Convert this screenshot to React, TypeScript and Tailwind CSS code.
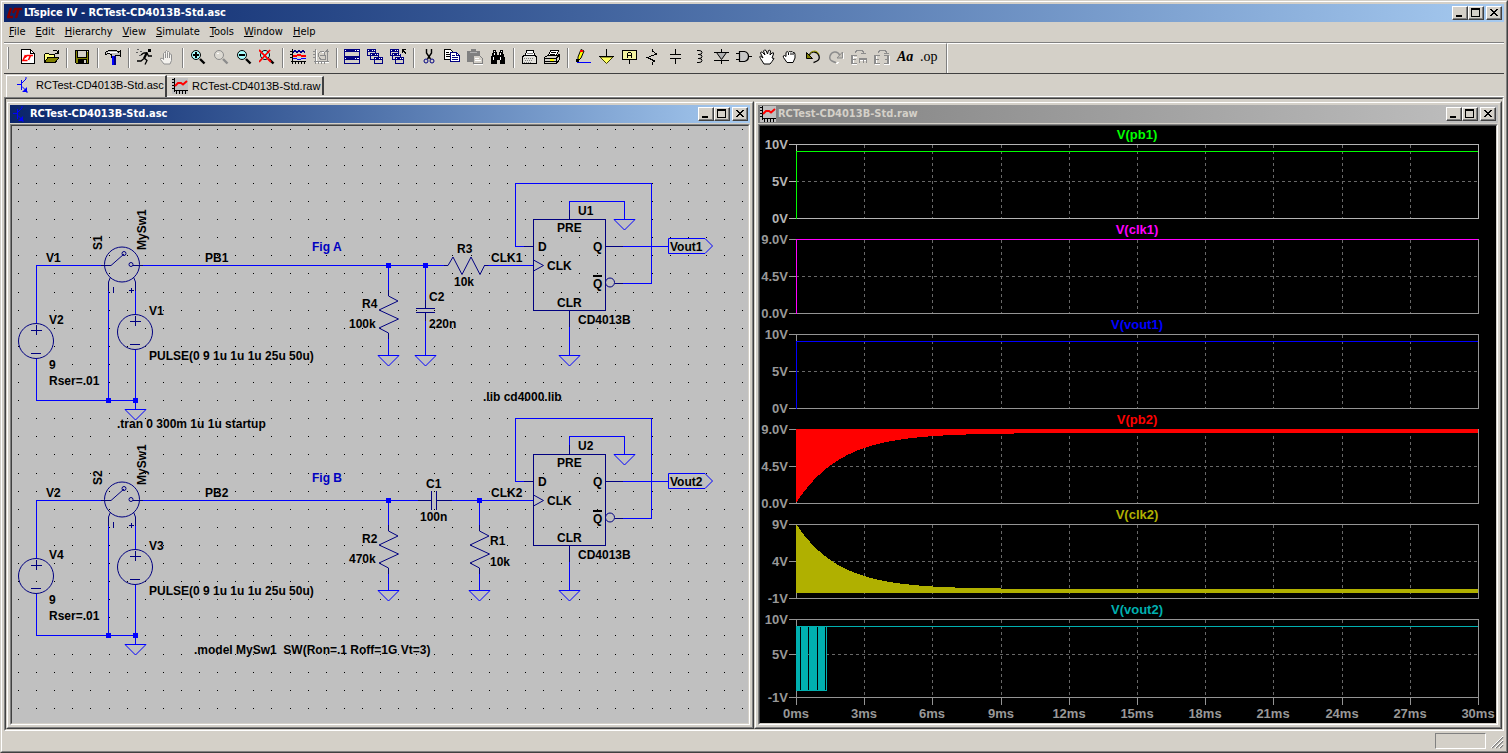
import type { ReactNode } from "react";

const menus = ["File", "Edit", "Hierarchy", "View", "Simulate", "Tools", "Window", "Help"];

const Icon = ({ children }: { children: ReactNode }) => (
  <svg
    width={16}
    height={16}
    viewBox="0 0 16 16"
    fill="none"
    stroke="#000"
    shapeRendering="crispEdges"
    aria-hidden="true"
    className="shrink-0">
    {children}
  </svg>
);

const Lens = ({ tint, line }: { tint: string; line: string }) => (
  <>
    <circle cx="6" cy="6" r="4.5" fill={tint} stroke={line} shapeRendering="auto" />
    <path d="M10 10l4.5 4.5" stroke={line} strokeWidth="2.4" shapeRendering="auto" />
  </>
);

const MiniWindow = ({ x, y }: { x: number; y: number }) => (
  <g stroke="none">
    <path d={`M${x} ${y}h9v7h-9z`} fill="#000080" />
    <path d={`M${x + 1} ${y + 3}h7v3h-7z`} fill="#d4d0c8" />
    <path d={`M${x + 1} ${y + 1}h1v1h-1zM${x + 5} ${y + 1}h1v1h-1zM${x + 7} ${y + 1}h1v1h-1z`} fill="#fff" />
  </g>
);

type Tool = { name: string; icon: ReactNode; disabled?: boolean };

const toolGroups: Tool[][] = [
  [
    {
      name: "New Schematic",
      icon: (
        <Icon>
          <path d="M1.5 .5h9l4 4v10h-13z" fill="#fff" />
          <path d="M10.5 .5v4h4" />
          <path d="M5.5 6L3 11.5h4.500M5 8.500L7 6.500h6M10.500 6.500L8.500 11" stroke="#f00" strokeWidth="1.6" shapeRendering="auto" />
        </Icon>
      ),
    },
    {
      name: "Open",
      icon: (
        <Icon>
          <path d="M1 14V5h1V4h3v1h6v3h-6L1 14z" fill="#ffff80" stroke="none" />
          <path d="M5 9h10.5l-3.5 5H2z" fill="#808000" stroke="none" />
          <path d="M1.5 13.5v-8l1-1h3l1 1h5v3M1.500 13.500l3.500-5h11l-4 5.500z" />
          <path d="M9.5 2.5l1-1h3l1.500 2M15.500 1v3.500H12" />
        </Icon>
      ),
    },
  ],
  [
    {
      name: "Save",
      icon: (
        <Icon>
          <path d="M1.5 1.5h13v13h-12l-1-1z" fill="#808000" />
          <path d="M4 2h8v6H4z" fill="#d4d0c8" stroke="none" />
          <path d="M3.5 1v7.5h9V1" />
          <path d="M4 10h9v5H4z" fill="#000" stroke="none" />
          <path d="M10 11h2v3h-2zM13 2h1v1h-1z" fill="#d4d0c8" stroke="none" />
        </Icon>
      ),
    },
  ],
  [
    {
      name: "Control Panel",
      icon: (
        <Icon>
          <path d="M.5 5.5V3.500L3.500 1.500h8l2 1.500 2-1v5l-2-1h-3.500v1.500h-4V5.500L3.500 4.500z" fill="#c0c0c0" />
          <path d="M3 3.5h9" stroke="#fff" />
          <path d="M7 7h3v9H7z" fill="#00f" stroke="none" />
          <path d="M9 7h2v9H9z" fill="#000080" stroke="none" />
          <path d="M6.5 7v2" />
        </Icon>
      ),
    },
  ],
  [
    {
      name: "Run",
      icon: (
        <Icon>
          <path d="M12 0h3v3h-3z" fill="#000" stroke="none" />
          <path d="M7.5 4h3.500l1.500 3H16M8 9l3 2.500-2 4M8 9.500l-3 2.500H1M7.500 4L5 6" strokeWidth="1.3" shapeRendering="auto" />
          <path d="M11 3.5L8 9.500" strokeWidth="2.2" shapeRendering="auto" />
          <path d="M1 .5h2M0 3.500h2M4 2.500h2M3 6.500h2" stroke="#606060" />
        </Icon>
      ),
    },
    {
      name: "Halt",
      disabled: true,
      icon: (
        <Icon>
          <path
            d="M5 15L1.500 10.500Q1 8.500 3.500 9.500L4.500 10.500V4.500Q5.500 2.500 6.500 4.500V2.500Q7.500.5 8.500 2.500V3.500Q9.500 1.500 10.500 3.500V5.500Q12 4 12.500 6V11.500L11 15z"
            fill="#f4f2ee"
            stroke="#909090"
            shapeRendering="auto"
          />
          <path d="M6.500 5v4M8.500 4v5M10.500 5v4" stroke="#909090" />
        </Icon>
      ),
    },
  ],
  [
    {
      name: "Zoom In",
      icon: (
        <Icon>
          <Lens tint="#a8ffff" line="#000" />
          <path d="M3 6h6M6 3v6" strokeWidth="2" />
        </Icon>
      ),
    },
    {
      name: "Pan",
      disabled: true,
      icon: (
        <Icon>
          <Lens tint="#dcd9d2" line="#8c8c8c" />
          <path d="M4 4h2" stroke="#fff" />
        </Icon>
      ),
    },
    {
      name: "Zoom Back",
      icon: (
        <Icon>
          <Lens tint="#a8ffff" line="#000" />
          <path d="M3 6h6" strokeWidth="2" />
        </Icon>
      ),
    },
    {
      name: "Zoom Full Extents",
      icon: (
        <Icon>
          <Lens tint="#a8ffff" line="#000" />
          <path d="M0 1l12 12M11 1L0 13" stroke="#f00" strokeWidth="1.8" shapeRendering="auto" />
        </Icon>
      ),
    },
  ],
  [
    {
      name: "Autorange",
      icon: (
        <Icon>
          <path d="M2.5 0v15M1 12.500h15M0 2.500h2M0 5.500h2M0 8.500h2M5.500 13v2M8.500 13v2M11.500 13v2M14.500 13v2" />
          <path d="M3 3.5l2-2 2 2 2-2 2 2 2-2 2 2" stroke="#000080" />
          <path d="M3 7h3l2-1h2l2 1h4" stroke="#f00" strokeWidth="1.600" />
          <path d="M3 9.5h3l2 1h2l2-1h4" stroke="#00f" />
        </Icon>
      ),
    },
    {
      name: "FFT",
      disabled: true,
      icon: (
        <Icon>
          <path d="M3.500 1v13M2 13.500h14M9 3.500h3" stroke="#fff" />
          <path d="M2.5 0v15M1 12.500h15M0 2.500h2M0 5.500h2M0 8.500h2M5.500 13v2M8.500 13v2M11.500 13v2" stroke="#8c8c8c" />
          <path d="M14.5 1v11M12.500 3l2-2 1 2M9 2.500Q5 3 5.500 6.500T9 10.500h3M9 2.500q3 0 3 3v5M7 6.500h5" stroke="#8c8c8c" />
        </Icon>
      ),
    },
  ],
  [
    {
      name: "Tile Windows",
      icon: (
        <Icon>
          <g stroke="none">
            <path d="M0 0h16v15H0z" fill="#000080" />
            <path d="M1 3h14v4H1zM1 11h14v3H1z" fill="#d4d0c8" />
            <path d="M1 1h1v1H1zM11 1h1v1h-1zM13 1h2v1h-2zM1 9h1v1H1zM11 9h1v1h-1zM13 9h2v1h-2z" fill="#fff" />
          </g>
        </Icon>
      ),
    },
    {
      name: "Cascade",
      icon: (
        <Icon>
          <MiniWindow x={0} y={0} />
          <MiniWindow x={3} y={4} />
          <MiniWindow x={7} y={8} />
        </Icon>
      ),
    },
    {
      name: "Close All",
      icon: (
        <Icon>
          <MiniWindow x={0} y={0} />
          <MiniWindow x={2} y={4} />
          <MiniWindow x={5} y={8} />
          <path d="M9 0h4v5h-4z" fill="#d4d0c8" stroke="none" />
          <path d="M12.5 4V.5H16M12.500 1l3.500 3.500" />
        </Icon>
      ),
    },
  ],
  [
    {
      name: "Cut",
      icon: (
        <Icon>
          <path d="M5.5 0v4l4 6M10.500 0v4l-4 6" strokeWidth="1.4" shapeRendering="auto" />
          <circle cx="5" cy="12" r="2" stroke="#000080" shapeRendering="auto" />
          <circle cx="11" cy="12" r="2" stroke="#000080" shapeRendering="auto" />
        </Icon>
      ),
    },
    {
      name: "Copy",
      icon: (
        <Icon>
          <path d="M.5 .5h6l2 2v8h-8z" fill="#fff" />
          <path d="M2 3.5h3M2 5.500h5M2 7.500h5" />
          <path d="M6.5 3.5h6l3 3v6h-9z" fill="#fff" stroke="#000080" />
          <path d="M12.5 3.5v3h3M8 6.500h3M8 8.500h6M8 10.500h6" stroke="#000080" />
        </Icon>
      ),
    },
    {
      name: "Paste",
      disabled: true,
      icon: (
        <Icon>
          <path d="M0 2h4V0h5v2h4v11H0z" fill="#808080" stroke="none" />
          <path d="M3 3.5h7" stroke="#b0b0b0" />
          <path d="M6.5 6.5h6l3 3v5h-9z" fill="#d4d0c8" stroke="#808080" />
          <path d="M8 9.5h4M8 11.500h6M7 15.500h9" stroke="#fff" />
        </Icon>
      ),
    },
    {
      name: "Find",
      icon: (
        <Icon>
          <path d="M3 1h3v2h1v3h2V3h1V1h3v2l2 6v6h-5v-4H7v4H1V9l2-6z" fill="#000" stroke="none" />
          <path d="M4 4v2M3 8v3M10.500 4v2M10.500 8v3M4 2h1M11 2h1" stroke="#fff" />
        </Icon>
      ),
    },
  ],
  [
    {
      name: "Print Setup",
      icon: (
        <Icon>
          <path d="M4.5 6.5l1-5h7l1 5" fill="#fff" />
          <path d="M1.5 7.5l2-1h10l2 1v7h-14z" fill="#e4e2dc" />
          <path d="M3 9h1M5 9h1M7 9h1M9 9h1M11 9h1M4 11h1M6 11h1M8 11h1M10 11h1M3 13h1M5 13h1M7 13h1M9 13h1" stroke="#808080" />
          <path d="M6 4h6" stroke="#808080" />
        </Icon>
      ),
    },
    {
      name: "Print",
      icon: (
        <Icon>
          <path d="M4.5 6.5l2-5h8l-2 5" fill="#fff" />
          <path d="M7 3.5h5M6 5.500h5" />
          <path d="M.5 8.5l3-2h10l2-1v5l-3 4h-12z" fill="#d4d0c8" />
          <path d="M1 9.5h11l3-3M1 12.500h11M12.500 9v5" />
          <path d="M6 10h4v2H6z" fill="#ff0" stroke="none" />
        </Icon>
      ),
    },
  ],
  [
    {
      name: "Wire",
      icon: (
        <Icon>
          <path d="M3 8L6 .5l3 1.500L6 9l-3 3z" fill="#ff0" shapeRendering="auto" />
          <path d="M5.5 1.5L8 2.500" stroke="#f00" strokeWidth="2" />
          <path d="M1 10h3v3H1z" fill="#000" stroke="none" />
          <path d="M2 13.5h14" stroke="#00f" />
        </Icon>
      ),
    },
    {
      name: "Ground",
      icon: (
        <Icon>
          <path d="M2 8h13l-6.500 6.500z" fill="#ffff60" stroke="#404000" shapeRendering="auto" />
          <path d="M8.5 0v7M1 7.500h15" />
        </Icon>
      ),
    },
    {
      name: "Label Net",
      icon: (
        <Icon>
          <path d="M1.5 1.5h14v9h-14z" fill="#f4f4a0" />
          <path d="M8.5 11v4M6.500 9v-4l1-1.500h2l1 1.500v4M7 6.500h4" />
        </Icon>
      ),
    },
    {
      name: "Resistor",
      icon: (
        <Icon>
          <path d="M8.5 0v2l4 3-9 3.500 7 3.500-2 1.500V16" />
        </Icon>
      ),
    },
    {
      name: "Capacitor",
      icon: (
        <Icon>
          <path d="M8.5 0v5M8.500 9v6M3 5.500h11M3 9.500h11" />
        </Icon>
      ),
    },
    {
      name: "Inductor",
      icon: (
        <Icon>
          <path d="M7 1.5h2q3 0 3 2t-3 2H8h1q3 0 3 2t-3 2H8h1q3 0 3 2t-3 2H7" shapeRendering="auto" />
        </Icon>
      ),
    },
    {
      name: "Diode",
      icon: (
        <Icon>
          <path d="M3.5 3.5h10l-5 7z" fill="#b0b0b0" shapeRendering="auto" />
          <path d="M1 3.5h15M8.500 0v3M8.500 11v4M1 11.500h15" />
        </Icon>
      ),
    },
    {
      name: "Component",
      icon: (
        <Icon>
          <path d="M0 4.5h4M0 10.500h4M12 7.500h4" />
          <path d="M3.5 2.5h5q4 1 4 5t-4 5h-5z" fill="#c8c8c8" strokeWidth="1.2" shapeRendering="auto" />
        </Icon>
      ),
    },
    {
      name: "Move",
      icon: (
        <Icon>
          <path
            d="M5 15L1.500 9.500Q0 7.500 1.500 7L4 9 1.500 4Q2 2 3.500 3.500L6 6 4.500 2Q5.500 0 7 1.500L8.500 5 9.500 1.500Q11 .5 11.500 2L11 6l2-2Q15 3 14.500 5L13 9l2 .5-2 3-2 2.500z"
            fill="#fff"
            shapeRendering="auto"
          />
        </Icon>
      ),
    },
    {
      name: "Drag",
      icon: (
        <Icon>
          <path
            d="M5 13.5L1.500 8.500Q.5 6.500 2.500 6.500L4 7.500V3.500Q5 1.500 6.500 3.500Q7 1.500 9 3Q10 1.500 11 3.500Q13 3 13 5.500V9l-2 4.500z"
            fill="#fff"
            shapeRendering="auto"
          />
          <path d="M6.5 4v2M9 4v2M11 4v2" shapeRendering="auto" />
        </Icon>
      ),
    },
    {
      name: "Undo",
      icon: (
        <Icon>
          <path d="M4 6.5Q6 2.500 9.500 3t4.500 4-2 5-3.500 1.500" strokeWidth="1.300" shapeRendering="auto" />
          <path d="M4.5 5Q7 1.500 10 2t4 3.500" stroke="#a0a000" shapeRendering="auto" />
          <path d="M1.5 3.5v6h6z" fill="#808000" shapeRendering="auto" />
        </Icon>
      ),
    },
    {
      name: "Redo",
      disabled: true,
      icon: (
        <Icon>
          <path d="M12 6.5Q10 2.500 6.500 3T2 7t2 5 4 1.500" stroke="#8c8c8c" strokeWidth="1.500" shapeRendering="auto" />
          <path d="M14.5 3v6H9z" fill="#c4c0b8" stroke="#8c8c8c" shapeRendering="auto" />
          <path d="M15.5 4v6M8 14.500l3-1" stroke="#fff" />
        </Icon>
      ),
    },
    {
      name: "Rotate",
      disabled: true,
      icon: (
        <Icon>
          <path d="M2.500 7v8M1 15.500h5M8 11.500h8M2 8.500h4" stroke="#fff" />
          <path d="M1 6v9M8 10h8" stroke="#8c8c8c" strokeWidth="2" />
          <path d="M1 6.500h5M1 10.500h4M1 14.500h5M8.500 14v-4M12.500 10v4M15.500 9v5M4.500 4V2.500l2-1h4l2 1V5M10 4.500h5" stroke="#8c8c8c" />
        </Icon>
      ),
    },
    {
      name: "Mirror",
      disabled: true,
      icon: (
        <Icon>
          <path d="M2.500 7v8M1 15.500h5M10 15.500h6M15.500 7v9" stroke="#fff" />
          <path d="M1 6v9M14 6v9" stroke="#8c8c8c" strokeWidth="2" />
          <path d="M1 6.500h5M1 10.500h4M1 14.500h5M10 6.500h5M11 10.500h4M10 14.500h5M4.500 4V2.500l2-1h4l2 1V5M10 4.500h5" stroke="#8c8c8c" />
        </Icon>
      ),
    },
    {
      name: "Text",
      icon: <span className="font-['Liberation_Serif',serif] text-sm font-bold italic leading-4">Aa</span>,
    },
    {
      name: "SPICE Directive",
      icon: <span className="font-['Liberation_Serif',serif] text-sm leading-4">.op</span>,
    },
  ],
];

const Transistor = () => (
  <Icon>
    <g stroke="#00f">
      <path d="M1 7.5h4M5.500 3v10" />
      <path d="M6 6l4-4V0M6 9.500l5 5V16" shapeRendering="auto" />
      <path d="M11 10v5H6z" fill="#00f" stroke="none" shapeRendering="auto" />
    </g>
  </Icon>
);

const WaveIcon = () => (
  <Icon>
    <path d="M0 0h16v16H0z" fill="#c0c0c0" stroke="none" />
    <path d="M2.5 0v14M2 12.500h14" />
    <path d="M0 1.500h2M0 4.500h2M0 7.500h2M0 10.500h2M4.500 13v3M7.500 13v3M10.500 13v3M13.500 13v3" strokeWidth="1.500" />
    <path d="M3 8l3-3h3l2 1.500 4-3.500" stroke="#f00" strokeWidth="2" shapeRendering="auto" />
  </Icon>
);

const captionButton =
  "flex h-3.5 w-4 items-center justify-center border border-t-white border-l-white border-r-[#404040] border-b-[#404040] bg-[#d4d0c8] shadow-[inset_-1px_-1px_0_#808080]";

const CaptionButtons = () => (
  <div className="flex">
    <button className={captionButton} aria-label="Minimize">
      <svg width={12} height={10} shapeRendering="crispEdges">
        <path d="M2 7h6v2H2z" />
      </svg>
    </button>
    <button className={captionButton} aria-label="Maximize">
      <svg width={12} height={10} shapeRendering="crispEdges">
        <path d="M1 0h9v9H1zM2 2v6h7V2z" fillRule="evenodd" />
      </svg>
    </button>
    <button className={`${captionButton} ml-0.5`} aria-label="Close">
      <svg width={12} height={10} shapeRendering="crispEdges">
        <path d="M2 1h2v1h1v1h2V2h1V1h2v1H9v1H8v1H7v1h1v1h1v1h1v1H8V7H7V6H5v1H4v1H2V7h1V6h1V5h1V4H4V3H3V2H2z" />
      </svg>
    </button>
  </div>
);

type ChildWindowProps = { title: string; icon: ReactNode; active?: boolean; children: ReactNode };

const ChildWindow = ({ title, icon, active, children }: ChildWindowProps) => (
  <section className="flex min-w-0 flex-1 border border-t-[#d4d0c8] border-r-[#404040] border-b-[#404040] border-l-[#d4d0c8]">
    <div className="flex min-w-0 flex-1 flex-col border border-t-white border-r-[#808080] border-b-[#808080] border-l-white p-0.5">
      <header
        className={
          active
            ? "flex h-[18px] items-center gap-0.5 bg-linear-to-r from-[#0a246a] to-[#a6caf0] px-0.5 text-white"
            : "flex h-[18px] items-center gap-0.5 bg-linear-to-r from-[#808080] to-[#c0c0c0] px-0.5 text-[#d4d0c8]"
        }>
        {icon}
        <h2 className="flex-1 font-['DejaVu_Sans_Condensed','DejaVu_Sans',sans-serif] text-[11px] font-bold leading-4">
          {title}
        </h2>
        <CaptionButtons />
      </header>
      <div className="mt-px flex min-h-0 flex-1 border border-t-[#808080] border-r-white border-b-white border-l-[#808080]">
        <div className="min-h-0 min-w-0 flex-1 border border-t-[#404040] border-r-[#d4d0c8] border-b-[#d4d0c8] border-l-[#404040]">
          {children}
        </div>
      </div>
    </div>
  </section>
);

// one 1px dot every 18.1px, snapped to whole pixels
const gridDots = Array.from({ length: 33 }, (_, row) =>
  Array.from({ length: 41 }, (_, col) => `M${Math.round(18 + col * 18.1)} ${Math.round(128.6 + row * 18.1)}.5h1`).join(""),
).join("");

const Ground = ({ x, y }: { x: number; y: number }) => (
  <path d={`M${x - 10} ${y}.5h21l-10.5 10.5z`} stroke="#00f" shapeRendering="auto" />
);

const Node = ({ x, y }: { x: number; y: number }) => (
  <path d={`M${x - 2} ${y - 2}h5v5h-5z`} fill="#00f" stroke="none" />
);

const Label = ({ x, y, children }: { x: number; y: number; children: ReactNode }) => (
  <text x={x} y={y} fill="#000" stroke="none" className="whitespace-pre">
    {children}
  </text>
);

const VerticalLabel = ({ x, y, children }: { x: number; y: number; children: ReactNode }) => (
  <text transform={`translate(${x} ${y}) rotate(-90)`} fill="#000" stroke="none">
    {children}
  </text>
);

const VSource = ({ x, y }: { x: number; y: number }) => (
  <g stroke="#000080">
    <circle cx={x} cy={y} r="17.5" shapeRendering="auto" />
    <path d={`M${x - 5} ${y - 11}.5h11M${x}.5 ${y - 16}v10M${x - 5} ${y + 12}.5h10`} />
  </g>
);

const VResistor = ({ x, y }: { x: number; y: number }) => (
  <path d={`M${x}.5 ${y - 6}v6l9.5 5-19 9 19.500 9-19.500 9 9.500 5v6`} stroke="#000080" shapeRendering="auto" />
);

type StageProps = { supply: string; input: string; pulse: string; net: string; sw: string; chip: string; clk: string; out: string };

// Everything the two test circuits share: supply, switch, pulse source and flip-flop
const Stage = ({ supply, input, pulse, net, sw, chip, clk, out }: StageProps) => (
  <>
    <path
      stroke="#00f"
      d="M36.5 323V265.500H102M36.500 359v41.500H136M108.500 290V400M135.500 290v25M135.500 350v59M143 265.500H388M569.500 219v-17.500H624.500V219M533 246.500H515.500V183.500H651.500V283.500H615M605 246.500H669M569.500 310V355"
    />
    <Node x={108} y={400} />
    <Node x={135} y={400} />
    <Ground x={135} y={409} />
    <VSource x={36} y={341} />
    <VSource x={135} y={332} />

    <g stroke="#000080">
      <circle cx="122" cy="264.5" r="17.5" shapeRendering="auto" />
      <circle cx="124" cy="253.5" r="2" shapeRendering="auto" />
      <circle cx="131" cy="264.5" r="2" shapeRendering="auto" />
      <path d="M101 265.5h10M133 265.500h10M108.500 282v9M135.500 282v9M113.500 287v6M129 290.500h5M131.500 288v5" />
      <path d="M111 265.5L124 254M110.500 277l-2 5M133.500 277l2 5" shapeRendering="auto" />
      <path d="M533.5 219.5h72v91h-72zM524 246.500h9M524 265.500h9M605 246.500h18M615 283.500h8M569.500 210v9M569.500 310v17" />
      <circle cx="610" cy="282.5" r="4.5" shapeRendering="auto" />
      <path d="M533.5 260l10 5.500-10 5.500" shapeRendering="auto" />
    </g>

    <Ground x={624} y={219} />
    <Ground x={569} y={355} />
    <path d="M668.5 238.5H705l7.500 7.500-7.500 7.500H668.500z" stroke="#00f" shapeRendering="auto" />

    <Label x={46} y={262}>{input}</Label>
    <VerticalLabel x={102} y={250}>{sw}</VerticalLabel>
    <VerticalLabel x={146} y={250}>MySw1</VerticalLabel>
    <Label x={205} y={262}>{net}</Label>
    <Label x={49} y={324}>{supply}</Label>
    <Label x={49} y={369}>9</Label>
    <Label x={49} y={385}>Rser=.01</Label>
    <Label x={149} y={315}>{pulse}</Label>
    <Label x={149} y={360}>PULSE(0 9 1u 1u 1u 25u 50u)</Label>
    <Label x={491} y={262}>{clk}</Label>
    <Label x={578} y={215}>{chip}</Label>
    <Label x={557} y={232}>PRE</Label>
    <Label x={538} y={251}>D</Label>
    <Label x={547} y={270}>CLK</Label>
    <Label x={593} y={251}>Q</Label>
    <Label x={593} y={288}>Q</Label>
    <path d="M593 276h9" stroke="#000" strokeWidth="2" />
    <Label x={557} y={307}>CLR</Label>
    <Label x={578} y={324}>CD4013B</Label>
    <Label x={670} y={251}>{out}</Label>
  </>
);

const Schematic = () => (
  <svg
    viewBox="12 126 736 597"
    preserveAspectRatio="xMinYMin meet"
    fill="none"
    shapeRendering="crispEdges"
    className="block h-full w-full bg-[#c0c0c0] font-['Liberation_Sans',Arial,sans-serif] text-[12px] font-bold">
    <path d={gridDots} stroke="#000" />

    <Stage supply="V2" input="V1" pulse="V1" net="PB1" sw="S1" chip="U1" clk="CLK1" out="Vout1" />
    <path d="M388 265.5H448M484 265.500h49M388.500 265v25M388.500 338v17M425.500 265v43M425.500 313v42" stroke="#00f" />
    <path d="M416 308.5h19M416 312.500h19M425.500 300v8M425.500 313v8" stroke="#000080" />
    <path d="M444 265.5h4l5-8.500 9 17.500 9-17.500 9 17.500 4.500-9h4" stroke="#000080" shapeRendering="auto" />
    <VResistor x={388} y={296} />
    <Node x={388} y={265} />
    <Node x={425} y={265} />
    <Ground x={388} y={355} />
    <Ground x={425} y={355} />
    <Label x={457} y={253}>R3</Label>
    <Label x={454} y={286}>10k</Label>
    <Label x={362} y={308}>R4</Label>
    <Label x={349} y={328}>100k</Label>
    <Label x={429} y={301}>C2</Label>
    <Label x={429} y={328}>220n</Label>

    <g transform="translate(0 235)">
      <Stage supply="V4" input="V2" pulse="V3" net="PB2" sw="S2" chip="U2" clk="CLK2" out="Vout2" />
      <path d="M388 265.5H418M452 265.500h81M388.500 265v25M388.500 338v17M479.500 265v25M479.500 338v17" stroke="#00f" />
      <path d="M418 265.5h13M437 265.500h15M431.500 256v19M436.500 256v19" stroke="#000080" />
      <VResistor x={388} y={296} />
      <VResistor x={479} y={296} />
      <Node x={388} y={265} />
      <Node x={479} y={265} />
      <Ground x={388} y={355} />
      <Ground x={479} y={355} />
      <Label x={426} y={253}>C1</Label>
      <Label x={420} y={286}>100n</Label>
      <Label x={362} y={308}>R2</Label>
      <Label x={349} y={328}>470k</Label>
      <Label x={490} y={310}>R1</Label>
      <Label x={490} y={331}>10k</Label>
    </g>

    <text x={312} y={251} fill="#0000c0">Fig A</text>
    <text x={312} y={482} fill="#0000c0">Fig B</text>
    <Label x={117} y={428}>.tran 0 300m 1u 1u startup</Label>
    <Label x={483} y={401}>.lib cd4000.lib</Label>
    <Label x={194} y={654}>{".model MySw1  SW(Ron=.1 Roff=1G Vt=3)"}</Label>
  </svg>
);

const LEFT = 36;
const RIGHT = 718;

const timeTicks = Array.from({ length: 11 }, (_, i) => ({
  x: Math.round(LEFT + i * 68.2),
  label: `${i * 3}ms`,
}));

// Exponential envelope sampled once per pixel column
const envelope = (start: number, end: number, tau: number, base: number) => {
  const points = Array.from(
    { length: RIGHT - LEFT },
    (_, i) => `L${LEFT + i} ${Math.round(end + (start - end) * Math.exp(-i / tau))}`,
  );
  return `M${LEFT} ${base}${points.join("")}L${RIGHT} ${end}V${base}z`;
};

type Pane = { title: string; color: string; top: number; mid: number; bottom: number; labels: [string, string, string]; trace: ReactNode };

const panes: Pane[] = [
  {
    title: "V(pb1)",
    color: "#00ff00",
    top: 18,
    mid: 55,
    bottom: 92,
    labels: ["10V", "5V", "0V"],
    trace: <path d="M36.5 93V25.500H718" stroke="#00ff00" />,
  },
  {
    title: "V(clk1)",
    color: "#ff00ff",
    top: 113,
    mid: 150,
    bottom: 187,
    labels: ["9.0V", "4.5V", "0.0V"],
    trace: <path d="M36.5 188V113.500H718" stroke="#ff00ff" />,
  },
  {
    title: "V(vout1)",
    color: "#0000ff",
    top: 208,
    mid: 245,
    bottom: 282,
    labels: ["10V", "5V", "0V"],
    trace: <path d="M36.5 283V215.500H718" stroke="#0000ff" />,
  },
  {
    title: "V(pb2)",
    color: "#ff0000",
    top: 303,
    mid: 340,
    bottom: 377,
    labels: ["9.0V", "4.5V", "0.0V"],
    trace: <path d={envelope(377, 307, 44, 303)} fill="#ff0000" />,
  },
  {
    title: "V(clk2)",
    color: "#b0b000",
    top: 398,
    mid: 435,
    bottom: 472,
    labels: ["9V", "4V", "-1V"],
    trace: <path d={envelope(398, 463, 42, 467)} fill="#b0b000" />,
  },
  {
    title: "V(vout2)",
    color: "#00b0b0",
    top: 493,
    mid: 528,
    bottom: 571,
    labels: ["10V", "5V", "-1V"],
    trace: (
      <>
        <path d="M36 500h4v65h-4zM41 500h7v65h-7zM49 500h8v65h-8zM58 500h7v65h-7z" fill="#00b0b0" />
        <path d="M36 564.5h30.500V500.500H718M36 500.500h30" stroke="#00b0b0" />
      </>
    ),
  },
];

const Waveforms = () => (
  <svg
    viewBox="0 0 736 597"
    preserveAspectRatio="xMinYMin meet"
    fill="none"
    shapeRendering="crispEdges"
    className="block h-full w-full bg-black font-['Liberation_Sans',Arial,sans-serif] text-[13px] font-bold">
    {panes.map((pane, index) => (
      <g key={pane.title}>
        <g stroke="#686868" strokeDasharray="3 3">
          {timeTicks.slice(1, -1).map(({ x }) => (
            <path key={x} d={`M${x}.5 ${pane.top + 1}V${pane.bottom}`} />
          ))}
          <path d={`M${LEFT} ${pane.mid}.5H${RIGHT}`} />
        </g>
        <g stroke={index === 0 ? "#b4b4b4" : "#949494"}>
          <path d={`M${LEFT}.5 ${pane.top}.5H${RIGHT}.5V${pane.bottom}.5H${LEFT}.5z`} />
          <path d={`M29 ${pane.top}.5h7M29 ${pane.mid}.5h7M29 ${pane.bottom}.5h7`} />
        </g>
        {pane.trace}
        <text x={377} y={pane.top - 5} textAnchor="middle" fill={pane.color}>
          {pane.title}
        </text>
        <g fill={index === 0 ? "#b4b4b4" : "#989898"} textAnchor="end">
          <text x={28} y={pane.top + 5}>{pane.labels[0]}</text>
          <text x={28} y={pane.mid + 5}>{pane.labels[1]}</text>
          <text x={28} y={pane.bottom + 5}>{pane.labels[2]}</text>
        </g>
      </g>
    ))}
    {timeTicks.map(({ x, label }) => (
      <g key={label}>
        <path d={`M${x}.5 572v7`} stroke="#949494" />
        <text x={x} y={592} textAnchor="middle" fill="#989898">
          {label}
        </text>
      </g>
    ))}
  </svg>
);

const TitleBar = () => (
  <header className="flex h-[18px] items-center bg-linear-to-r from-[#0a246a] to-[#a6caf0] pr-0.5 pl-[3px] text-white">
    <svg width={17} height={16} viewBox="0 0 17 16" fill="none" stroke="#800000" strokeWidth="2.4" aria-hidden="true">
      <path d="M4 3L1 12H6M6 8L8 4H15M11.5 4L9 13" />
    </svg>
    <h1 className="flex-1 font-['DejaVu_Sans_Condensed','DejaVu_Sans',sans-serif] text-[11px] font-bold leading-4">
      LTspice IV - RCTest-CD4013B-Std.asc
    </h1>
    <CaptionButtons />
  </header>
);

const MenuBar = () => (
  <nav className="flex h-5 items-center font-['DejaVu_Sans_Condensed','DejaVu_Sans',sans-serif] text-[11px] leading-4">
    {menus.map((name) => (
      <button key={name} className="px-[5px]">
        <span className="underline underline-offset-1">{name[0]}</span>
        {name.slice(1)}
      </button>
    ))}
  </nav>
);

const ToolBar = () => (
  <div className="flex h-8 border-t border-b border-t-[#808080] border-b-[#404040]">
    <div role="toolbar" className="flex items-center border-t border-r border-t-white border-r-[#808080] pr-1.5 pb-px pl-[3px]">
      <span className="mr-2 h-[22px] w-0.5 border-l border-l-white bg-[#808080]" />
      {toolGroups.map((group, index) => (
        <div key={group[0].name} className="flex items-center">
          {index > 0 && <span className="mr-1 ml-[3px] h-5 w-px bg-[#808080] shadow-[1px_0_0_#fff]" />}
          {group.map(({ name, icon, disabled }) => (
            <button key={name} aria-label={name} disabled={disabled} className="flex h-[22px] w-[23px] items-center pb-0.5 pl-[3px]">
              {icon}
            </button>
          ))}
        </div>
      ))}
    </div>
    <div className="flex-1 border-t border-l border-white" />
  </div>
);

const Tabs = () => (
  <div role="tablist" className="flex h-[23px] items-end pl-0.5 font-['Liberation_Sans',Arial,sans-serif] text-[11px] leading-4">
    <button
      role="tab"
      aria-selected="true"
      className="flex h-[22px] w-[161px] items-center gap-1 border-t border-r-2 border-l border-t-white border-r-[#404040] border-l-white pb-1 pl-[9px] whitespace-nowrap">
      <Transistor />
      RCTest-CD4013B-Std.asc
    </button>
    <div className="flex h-[21px] flex-1 border-b border-white pb-px">
      <button
        role="tab"
        aria-selected="false"
        className="flex h-[19px] w-[157px] items-center gap-1 border-t border-r-2 border-t-white border-r-[#404040] pl-[5px] whitespace-nowrap">
        <WaveIcon />
        RCTest-CD4013B-Std.raw
      </button>
    </div>
  </div>
);

const StatusBar = () => (
  <footer className="flex h-[18px] items-center justify-end pt-0.5">
    <div className="h-4 w-[51px] border border-t-[#808080] border-r-white border-b-white border-l-[#808080]" />
    <svg width={18} height={16} viewBox="0 0 18 16" aria-hidden="true">
      <path d="M6 15L17 4M10 15l7-7M14 15l3-3" stroke="#808080" strokeWidth="1.5" />
      <path d="M5 15L17 3M9 15l8-8M13 15l4-4" stroke="#fff" />
    </svg>
  </footer>
);

export default function App() {
  return (
    <div className="flex h-screen border border-t-[#d4d0c8] border-r-[#404040] border-b-[#404040] border-l-[#d4d0c8] bg-[#d4d0c8] text-black">
      <div className="flex min-w-0 flex-1 flex-col border border-t-white border-r-[#808080] border-b-[#808080] border-l-white p-0.5">
        <TitleBar />
        <MenuBar />
        <ToolBar />
        <Tabs />
        <main className="flex min-h-0 flex-1 border border-t-[#808080] border-r-white border-b-white border-l-[#808080]">
          <div className="flex min-h-0 min-w-0 flex-1 border border-t-[#404040] border-r-[#d4d0c8] border-b-[#d4d0c8] border-l-[#404040] pt-0.5">
            <ChildWindow title="RCTest-CD4013B-Std.asc" icon={<Transistor />} active>
              <Schematic />
            </ChildWindow>
            <ChildWindow title="RCTest-CD4013B-Std.raw" icon={<WaveIcon />}>
              <Waveforms />
            </ChildWindow>
          </div>
        </main>
        <StatusBar />
      </div>
    </div>
  );
}
